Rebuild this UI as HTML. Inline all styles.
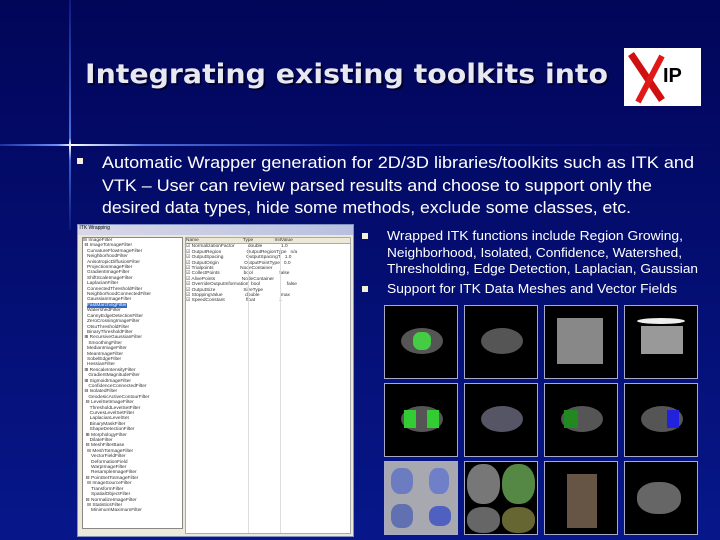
<!DOCTYPE html>
<html><head><meta charset="utf-8"><style>
*{margin:0;padding:0}
body{width:720px;height:540px;overflow:hidden;background:linear-gradient(#020659 0,#030a66 145px,#07178a 540px);position:relative;font-family:"Liberation Sans","DejaVu Sans",sans-serif}
.a{position:absolute}
.sq{background:#f4f0d8;width:6px;height:6px}
.win{left:77px;top:224px;width:275px;height:311px;background:#ece9d8;border:1px solid #8090c0}
.tb{left:0;top:0;width:275px;height:10px;background:linear-gradient(90deg,#d8d8e8,#b8c0e0);font-size:5px;color:#000}
.tree{left:4px;top:12px;width:99px;height:290px;background:#fff;border:1px solid #888;font-size:4.8px;line-height:5.4px;color:#333;overflow:hidden;white-space:nowrap}
.list{left:107px;top:12px;width:164px;height:295px;background:#fff;border:1px solid #aaa;font-size:4.8px;line-height:5.4px;color:#333;overflow:hidden;white-space:nowrap}
.img{position:absolute;width:72px;height:72px;background:#000;border:1px solid #a8a8c8}
svg.t{position:absolute;left:0;top:0}
</style></head><body>
<div class="a" style="left:69px;top:0;width:2px;height:230px;background:linear-gradient(#0a1a80,#4a70e0 60%,#fff 63%,#3a60d0 70%,#0a1a80)"></div>
<div class="a" style="left:0;top:144px;width:720px;height:2px;background:linear-gradient(90deg,#1a30a0,#6a90ff 8%,#fff 10%,#5070e0 20%,#0a1a90 50%,transparent)"></div>
<svg class="t" width="720" height="540">
<text x="87" y="85" font-family="DejaVu Sans" font-weight="bold" font-size="27" fill="#000030" textLength="523" lengthAdjust="spacingAndGlyphs">Integrating existing toolkits into</text>
<text x="85" y="83" font-family="DejaVu Sans" font-weight="bold" font-size="27" fill="#e8e8f0" textLength="523" lengthAdjust="spacingAndGlyphs">Integrating existing toolkits into</text>
<g font-family="Liberation Sans" font-size="17" fill="#fff">
<text x="102" y="168" textLength="592" lengthAdjust="spacingAndGlyphs">Automatic Wrapper generation for 2D/3D libraries/toolkits such as ITK and</text>
<text x="102" y="191" textLength="550" lengthAdjust="spacingAndGlyphs">VTK – User can review parsed results and choose to support only the</text>
<text x="102" y="213" textLength="529" lengthAdjust="spacingAndGlyphs">desired data types, hide some methods, exclude some classes, etc.</text>
</g>
<g font-family="Liberation Sans" font-size="12.5" fill="#fff">
<text x="387" y="240" textLength="296" lengthAdjust="spacingAndGlyphs">Wrapped ITK functions include Region Growing,</text>
<text x="387" y="257" textLength="295" lengthAdjust="spacingAndGlyphs">Neighborhood, Isolated, Confidence, Watershed,</text>
<text x="387" y="273" textLength="311" lengthAdjust="spacingAndGlyphs">Thresholding, Edge Detection, Laplacian, Gaussian</text>
<text x="387" y="293" textLength="290" lengthAdjust="spacingAndGlyphs">Support for ITK Data Meshes and Vector Fields</text>
</g>
</svg>
<div class="a" style="left:624px;top:48px;width:77px;height:58px;background:#fff">
<svg width="77" height="58"><path d="M7 6 L38 52" stroke="#d01010" stroke-width="7"/><path d="M38 8 L14 54" stroke="#e01818" stroke-width="6"/><text x="39" y="34" font-family="Liberation Sans" font-weight="bold" font-size="20" fill="#000">IP</text></svg></div>
<div class="a sq" style="left:77px;top:158px"></div>
<div class="a win"><div class="a tb">&nbsp;ITK Wrapping</div>
<div class="a tree">⊟ ImageFilter<br>&nbsp;⊟ ImageToImageFilter<br>&nbsp;&nbsp;&nbsp;CurvatureFlowImageFilter<br>&nbsp;&nbsp;&nbsp;NeighborhoodFilter<br>&nbsp;&nbsp;&nbsp;AnisotropicDiffusionFilter<br>&nbsp;&nbsp;&nbsp;ProjectionImageFilter<br>&nbsp;&nbsp;&nbsp;GradientImageFilter<br>&nbsp;&nbsp;&nbsp;ShiftScaleImageFilter<br>&nbsp;&nbsp;&nbsp;LaplacianFilter<br>&nbsp;&nbsp;&nbsp;ConnectedThresholdFilter<br>&nbsp;&nbsp;&nbsp;NeighborhoodConnectedFilter<br>&nbsp;&nbsp;&nbsp;GaussianImageFilter<br>&nbsp;&nbsp;&nbsp;<span style="background:#316ac5;color:#fff">FastMarchingFilter</span><br>&nbsp;&nbsp;&nbsp;WatershedFilter<br>&nbsp;&nbsp;&nbsp;CannyEdgeDetectionFilter<br>&nbsp;&nbsp;&nbsp;ZeroCrossingImageFilter<br>&nbsp;&nbsp;&nbsp;OtsuThresholdFilter<br>&nbsp;&nbsp;&nbsp;BinaryThresholdFilter<br>&nbsp;⊞ RecursiveGaussianFilter<br>&nbsp;&nbsp;&nbsp;&nbsp;SmoothingFilter<br>&nbsp;&nbsp;&nbsp;MedianImageFilter<br>&nbsp;&nbsp;&nbsp;MeanImageFilter<br>&nbsp;&nbsp;&nbsp;SobelEdgeFilter<br>&nbsp;&nbsp;&nbsp;HessianFilter<br>&nbsp;⊞ RescaleIntensityFilter<br>&nbsp;&nbsp;&nbsp;&nbsp;GradientMagnitudeFilter<br>&nbsp;⊞ SigmoidImageFilter<br>&nbsp;&nbsp;&nbsp;&nbsp;ConfidenceConnectedFilter<br>&nbsp;⊟ IsolatedFilter<br>&nbsp;&nbsp;&nbsp;&nbsp;GeodesicActiveContourFilter<br>&nbsp;&nbsp;⊟ LevelSetImageFilter<br>&nbsp;&nbsp;&nbsp;&nbsp;&nbsp;ThresholdLevelSetFilter<br>&nbsp;&nbsp;&nbsp;&nbsp;&nbsp;CurvesLevelSetFilter<br>&nbsp;&nbsp;&nbsp;&nbsp;&nbsp;LaplacianLevelSet<br>&nbsp;&nbsp;&nbsp;&nbsp;&nbsp;BinaryMaskFilter<br>&nbsp;&nbsp;&nbsp;&nbsp;&nbsp;ShapeDetectionFilter<br>&nbsp;&nbsp;⊞ MorphologyFilter<br>&nbsp;&nbsp;&nbsp;&nbsp;&nbsp;DilateFilter<br>&nbsp;&nbsp;⊟ MeshFilterBase<br>&nbsp;&nbsp;&nbsp;⊟ MeshToImageFilter<br>&nbsp;&nbsp;&nbsp;&nbsp;&nbsp;&nbsp;VectorFieldFilter<br>&nbsp;&nbsp;&nbsp;&nbsp;&nbsp;&nbsp;DeformationField<br>&nbsp;&nbsp;&nbsp;&nbsp;&nbsp;&nbsp;WarpImageFilter<br>&nbsp;&nbsp;&nbsp;&nbsp;&nbsp;&nbsp;ResampleImageFilter<br>&nbsp;&nbsp;⊟ PointSetToImageFilter<br>&nbsp;&nbsp;&nbsp;⊟ ImageSourceFilter<br>&nbsp;&nbsp;&nbsp;&nbsp;&nbsp;&nbsp;TransformFilter<br>&nbsp;&nbsp;&nbsp;&nbsp;&nbsp;&nbsp;SpatialObjectFilter<br>&nbsp;&nbsp;⊟ NormalizeImageFilter<br>&nbsp;&nbsp;&nbsp;⊟ StatisticsFilter<br>&nbsp;&nbsp;&nbsp;&nbsp;&nbsp;&nbsp;MinimumMaximumFilter</div>
<div class="a list"><div style="background:#ece9d8;border-bottom:1px solid #aaa">Name&nbsp;&nbsp;&nbsp;&nbsp;&nbsp;&nbsp;&nbsp;&nbsp;&nbsp;&nbsp;&nbsp;&nbsp;&nbsp;&nbsp;&nbsp;&nbsp;&nbsp;&nbsp;&nbsp;&nbsp;&nbsp;&nbsp;&nbsp;&nbsp;&nbsp;&nbsp;&nbsp;&nbsp;&nbsp;&nbsp;&nbsp;&nbsp;&nbsp;Type&nbsp;&nbsp;&nbsp;&nbsp;&nbsp;&nbsp;&nbsp;&nbsp;&nbsp;&nbsp;&nbsp;&nbsp;&nbsp;&nbsp;&nbsp;&nbsp;InitValue</div>☑ NormalizationFactor&nbsp;&nbsp;&nbsp;&nbsp;&nbsp;&nbsp;&nbsp;&nbsp;&nbsp;&nbsp;double&nbsp;&nbsp;&nbsp;&nbsp;&nbsp;&nbsp;&nbsp;&nbsp;&nbsp;&nbsp;&nbsp;&nbsp;&nbsp;&nbsp;1.0<br>☑ OutputRegion&nbsp;&nbsp;&nbsp;&nbsp;&nbsp;&nbsp;&nbsp;&nbsp;&nbsp;&nbsp;&nbsp;&nbsp;&nbsp;&nbsp;&nbsp;&nbsp;&nbsp;&nbsp;&nbsp;OutputRegionType&nbsp;&nbsp;&nbsp;n/a<br>☑ OutputSpacing&nbsp;&nbsp;&nbsp;&nbsp;&nbsp;&nbsp;&nbsp;&nbsp;&nbsp;&nbsp;&nbsp;&nbsp;&nbsp;&nbsp;&nbsp;&nbsp;&nbsp;OutputSpacingT&nbsp;&nbsp;&nbsp;1.0<br>☑ OutputOrigin&nbsp;&nbsp;&nbsp;&nbsp;&nbsp;&nbsp;&nbsp;&nbsp;&nbsp;&nbsp;&nbsp;&nbsp;&nbsp;&nbsp;&nbsp;&nbsp;&nbsp;&nbsp;&nbsp;OutputPointType&nbsp;&nbsp;&nbsp;0.0<br>☑ Trialpoints&nbsp;&nbsp;&nbsp;&nbsp;&nbsp;&nbsp;&nbsp;&nbsp;&nbsp;&nbsp;&nbsp;&nbsp;&nbsp;&nbsp;&nbsp;&nbsp;&nbsp;&nbsp;&nbsp;&nbsp;NodeContainer<br>☑ CollectPoints&nbsp;&nbsp;&nbsp;&nbsp;&nbsp;&nbsp;&nbsp;&nbsp;&nbsp;&nbsp;&nbsp;&nbsp;&nbsp;&nbsp;&nbsp;&nbsp;&nbsp;&nbsp;bool&nbsp;&nbsp;&nbsp;&nbsp;&nbsp;&nbsp;&nbsp;&nbsp;&nbsp;&nbsp;&nbsp;&nbsp;&nbsp;&nbsp;&nbsp;&nbsp;&nbsp;&nbsp;&nbsp;&nbsp;false<br>☑ AlivePoints&nbsp;&nbsp;&nbsp;&nbsp;&nbsp;&nbsp;&nbsp;&nbsp;&nbsp;&nbsp;&nbsp;&nbsp;&nbsp;&nbsp;&nbsp;&nbsp;&nbsp;&nbsp;&nbsp;&nbsp;NodeContainer<br>☑ OverrideOutputInformation&nbsp;&nbsp;bool&nbsp;&nbsp;&nbsp;&nbsp;&nbsp;&nbsp;&nbsp;&nbsp;&nbsp;&nbsp;&nbsp;&nbsp;&nbsp;&nbsp;&nbsp;&nbsp;&nbsp;&nbsp;&nbsp;&nbsp;false<br>☑ OutputSize&nbsp;&nbsp;&nbsp;&nbsp;&nbsp;&nbsp;&nbsp;&nbsp;&nbsp;&nbsp;&nbsp;&nbsp;&nbsp;&nbsp;&nbsp;&nbsp;&nbsp;&nbsp;&nbsp;&nbsp;&nbsp;SizeType<br>☑ StoppingValue&nbsp;&nbsp;&nbsp;&nbsp;&nbsp;&nbsp;&nbsp;&nbsp;&nbsp;&nbsp;&nbsp;&nbsp;&nbsp;&nbsp;&nbsp;&nbsp;&nbsp;double&nbsp;&nbsp;&nbsp;&nbsp;&nbsp;&nbsp;&nbsp;&nbsp;&nbsp;&nbsp;&nbsp;&nbsp;&nbsp;&nbsp;&nbsp;&nbsp;max<br>☑ SpeedConstant&nbsp;&nbsp;&nbsp;&nbsp;&nbsp;&nbsp;&nbsp;&nbsp;&nbsp;&nbsp;&nbsp;&nbsp;&nbsp;&nbsp;&nbsp;&nbsp;float&nbsp;&nbsp;&nbsp;&nbsp;&nbsp;&nbsp;&nbsp;&nbsp;&nbsp;&nbsp;&nbsp;&nbsp;&nbsp;&nbsp;&nbsp;&nbsp;&nbsp;&nbsp;1
<div class="a" style="left:62px;top:10px;width:1px;height:285px;background:#ddd"></div><div class="a" style="left:94px;top:10px;width:1px;height:285px;background:#ddd"></div></div>
</div>
<div class="a sq" style="left:362px;top:233px"></div>
<div class="a sq" style="left:362px;top:286px"></div>

<div class="img" style="left:384px;top:305px"><div class="a" style="left:16px;top:22px;width:42px;height:26px;border-radius:50%;background:#555"></div><div class="a" style="left:28px;top:26px;width:18px;height:18px;background:#4c4;border-radius:40%"></div></div>
<div class="img" style="left:464px;top:305px"><div class="a" style="left:16px;top:22px;width:42px;height:26px;border-radius:50%;background:#555"></div></div>
<div class="img" style="left:544px;top:305px"><div class="a" style="left:12px;top:12px;width:46px;height:46px;background:#888"></div></div>
<div class="img" style="left:624px;top:305px"><div class="a" style="left:12px;top:12px;width:48px;height:6px;background:#eee;border-radius:50%"></div><div class="a" style="left:16px;top:20px;width:42px;height:28px;background:#999"></div></div>
<div class="img" style="left:384px;top:383px"><div class="a" style="left:16px;top:22px;width:42px;height:26px;border-radius:50%;background:#555"></div><div class="a" style="left:19px;top:26px;width:12px;height:18px;background:#3c3"></div><div class="a" style="left:42px;top:26px;width:12px;height:18px;background:#3c3"></div></div>
<div class="img" style="left:464px;top:383px"><div class="a" style="left:16px;top:22px;width:42px;height:26px;border-radius:50%;background:#556"></div></div>
<div class="img" style="left:544px;top:383px"><div class="a" style="left:16px;top:22px;width:42px;height:26px;border-radius:50%;background:#555"></div><div class="a" style="left:19px;top:26px;width:14px;height:18px;background:#282"></div></div>
<div class="img" style="left:624px;top:383px"><div class="a" style="left:16px;top:22px;width:42px;height:26px;border-radius:50%;background:#555"></div><div class="a" style="left:42px;top:26px;width:12px;height:18px;background:#22d"></div></div>
<div class="img" style="left:384px;top:461px;background:#a8a8b0"><div class="a" style="left:6px;top:6px;width:22px;height:26px;background:#6c7cc0;border-radius:40%"></div><div class="a" style="left:44px;top:6px;width:20px;height:26px;background:#7080c8;border-radius:40%"></div><div class="a" style="left:6px;top:42px;width:22px;height:24px;background:#6070b0;border-radius:40%"></div><div class="a" style="left:44px;top:44px;width:22px;height:20px;background:#5060c0;border-radius:40%"></div></div>
<div class="img" style="left:464px;top:461px"><div class="a" style="left:2px;top:2px;width:33px;height:40px;background:#777;border-radius:45%"></div><div class="a" style="left:37px;top:2px;width:33px;height:40px;background:#584;border-radius:45%"></div><div class="a" style="left:2px;top:45px;width:33px;height:26px;background:#666;border-radius:45%"></div><div class="a" style="left:37px;top:45px;width:33px;height:26px;background:#663;border-radius:45%"></div></div>
<div class="img" style="left:544px;top:461px"><div class="a" style="left:22px;top:12px;width:30px;height:54px;background:#654"></div></div>
<div class="img" style="left:624px;top:461px"><div class="a" style="left:12px;top:20px;width:44px;height:32px;background:#666;border-radius:45%"></div></div>
</body></html>
